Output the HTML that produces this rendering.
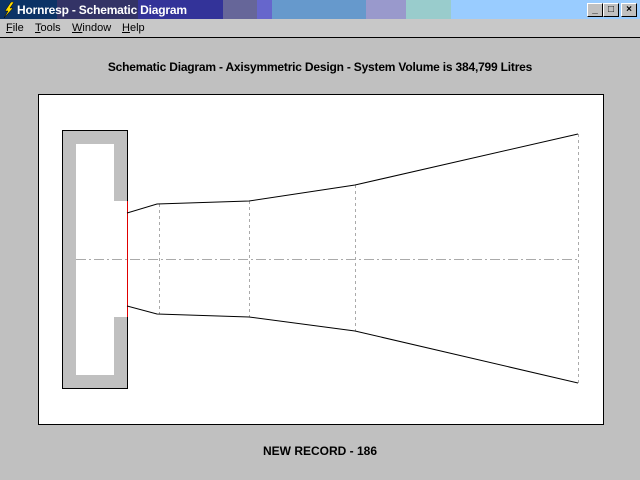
<!DOCTYPE html>
<html><head><style>
body{margin:0;width:640px;height:480px;background:#c0c0c0;position:relative;overflow:hidden;font-family:"Liberation Sans",sans-serif;}
.tb{position:absolute;left:0;top:0;width:640px;height:19px;background:linear-gradient(to right,#0c3366 0,#0c3366 57px,#333366 57px,#333366 138px,#333399 138px,#333399 223px,#666699 223px,#666699 257px,#6666cc 257px,#6666cc 272px,#6699cc 272px,#6699cc 366px,#9999cc 366px,#9999cc 406px,#99cccc 406px,#99cccc 451px,#99ccff 451px);}
.tt{position:absolute;left:17px;top:3px;color:#fff;font-weight:bold;font-size:12px;letter-spacing:-0.2px}
.btn{position:absolute;top:3px;width:14px;height:12px;background:#c0c0c0;border:1px solid;border-color:#fff #000 #000 #fff;font-size:10px;text-align:center;line-height:12px;font-weight:bold}
.mb{position:absolute;top:19px;left:0;width:640px;height:18px;background:#c8c8c8;border-bottom:1px solid #000;font-size:11px}
.mb span{position:absolute;top:3px}
.hd{position:absolute;top:60px;left:0;width:640px;text-align:center;font-size:12px;font-weight:bold;letter-spacing:-0.2px}
.ft{position:absolute;top:444px;left:0;width:640px;text-align:center;font-size:12px;font-weight:bold}
</style></head><body>
<div class="tb"><svg width="14" height="16" style="position:absolute;left:2px;top:2px"><path d="M9 0 L3 9 L6 9 L2 16 L11 6 L8 6 L12 0Z" fill="#ffdd00" stroke="#000" stroke-width="0.5"/></svg><div class="tt">Hornresp - Schematic Diagram</div>
<div class="btn" style="left:587px">_</div><div class="btn" style="left:603px">□</div><div class="btn" style="left:621px">×</div></div>
<div class="mb"><span style="left:6px"><u>F</u>ile</span><span style="left:35px"><u>T</u>ools</span><span style="left:72px"><u>W</u>indow</span><span style="left:122px"><u>H</u>elp</span></div>
<div class="hd">Schematic Diagram - Axisymmetric Design - System Volume is 384,799 Litres</div>
<svg width="640" height="480" style="position:absolute;left:0;top:0">
<rect x="38.5" y="94.5" width="565" height="330" fill="#fff" stroke="#000"/>
<rect x="62.5" y="130.5" width="65" height="258" fill="#c0c0c0" stroke="#000"/>
<rect x="76" y="144" width="38" height="231" fill="#fff"/>
<rect x="114" y="201" width="13" height="116" fill="#fff"/>
<line x1="127.5" y1="201" x2="127.5" y2="317" stroke="#e00000"/>
<g stroke="#aaa" stroke-dasharray="3,3"><line x1="159.5" y1="204" x2="159.5" y2="314"/><line x1="249.5" y1="201" x2="249.5" y2="317"/><line x1="355.5" y1="185" x2="355.5" y2="331"/><line x1="578.5" y1="134" x2="578.5" y2="383"/></g>
<line x1="76" y1="259.5" x2="578" y2="259.5" stroke="#aaa" stroke-dasharray="10,3,2,3"/>
<polyline points="127,213 157,204 249,201 355,185 578,134" fill="none" stroke="#000"/>
<polyline points="127,306 157,314 249,317 355,331 578,383" fill="none" stroke="#000"/>
</svg>
<div class="ft">NEW RECORD - 186</div>
</body></html>
